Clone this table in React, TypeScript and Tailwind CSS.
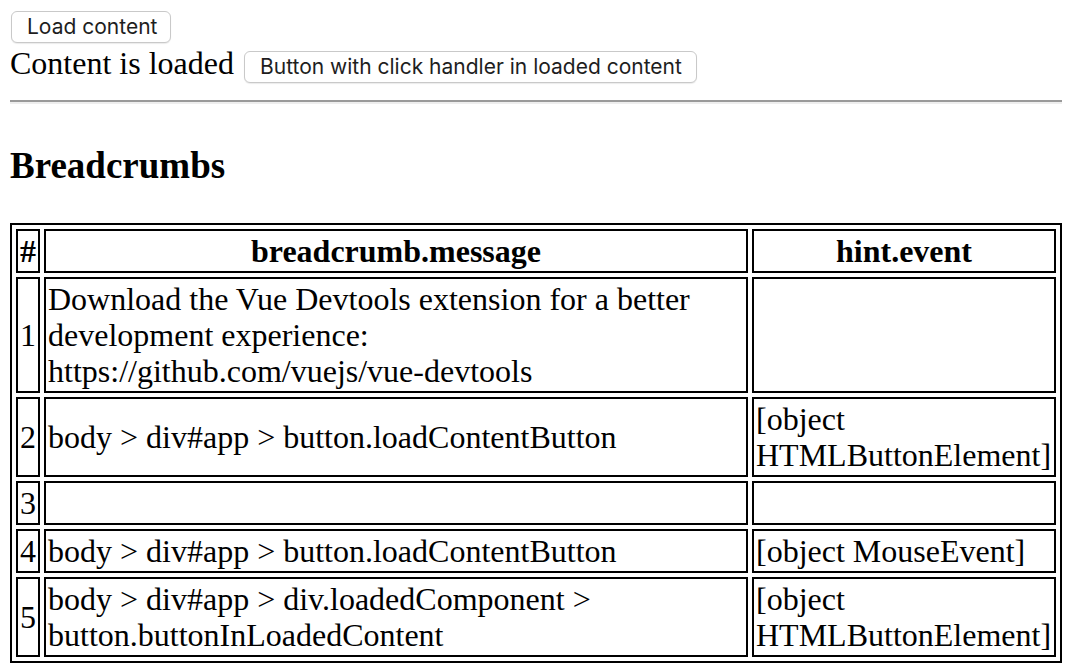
import React from "react";

const serif = { fontFamily: '"Liberation Serif", "Times New Roman", serif' };

export default function App() {
  const rows: { n: string; msg: React.ReactNode; hint: React.ReactNode }[] = [
    {
      n: "1",
      msg: (
        <>
          Download the Vue Devtools extension for a better
          <br />
          development experience:
          <br />
          https://github.com/vuejs/vue-devtools
        </>
      ),
      hint: "",
    },
    {
      n: "2",
      msg: "body > div#app > button.loadContentButton",
      hint: "[object HTMLButtonElement]",
    },
    { n: "3", msg: "", hint: "" },
    {
      n: "4",
      msg: "body > div#app > button.loadContentButton",
      hint: "[object MouseEvent]",
    },
    {
      n: "5",
      msg: (
        <>
          body &gt; div#app &gt; div.loadedComponent &gt;
          <br />
          button.buttonInLoadedContent
        </>
      ),
      hint: "[object HTMLButtonElement]",
    },
  ];

  const btn =
    "h-[32px] px-[15px] bg-white border border-[#c9c9c9] rounded-[6px] text-[21px] leading-[24px] text-[#1e1e1e] shadow-[0_1px_1px_rgba(0,0,0,0.08)] font-['Inter','Liberation_Sans',sans-serif] whitespace-nowrap";

  return (
    <div className="min-h-[672px] bg-white px-[10px] pt-[11px] text-black" style={serif}>
      <div>
        <button className={`${btn} w-[160px] ml-[1px]`}>Load content</button>
      </div>
      <div className="mt-[2px] flex items-baseline gap-[10px]">
        <span className="text-[32px] leading-[36px]">Content is loaded</span>
        <button className={`${btn} w-[453px]`}>Button with click handler in loaded content</button>
      </div>
      <div className="mt-[17px] border-t-2 border-b-2 border-t-[#9a9a9a] border-b-[#eeeeee]" />
      <h3 className="mt-[40px] text-[37px] leading-[43px] font-bold">Breadcrumbs</h3>
      <table
        className="mt-[36px] w-[1052px] table-fixed border-2 border-black border-separate text-[32px] leading-[36px]"
        style={{ borderSpacing: "4px" }}
      >
        <thead>
          <tr>
            <th className="w-[24px] border-2 border-black p-[2px] font-bold text-center">#</th>
            <th className="w-[704px] border-2 border-black p-[2px] font-bold text-center">breadcrumb.message</th>
            <th className="w-[304px] border-2 border-black p-[2px] font-bold text-center">hint.event</th>
          </tr>
        </thead>
        <tbody>
          {rows.map((r) => (
            <tr key={r.n}>
              <td className="border-2 border-black p-[2px] align-middle">{r.n}</td>
              <td className="border-2 border-black p-[2px] align-middle">
                {r.msg === "" ? <span>&nbsp;</span> : r.msg}
              </td>
              <td className="border-2 border-black p-[2px] align-middle">
                {r.hint === "" ? <span>&nbsp;</span> : r.hint}
              </td>
            </tr>
          ))}
        </tbody>
      </table>
    </div>
  );
}
